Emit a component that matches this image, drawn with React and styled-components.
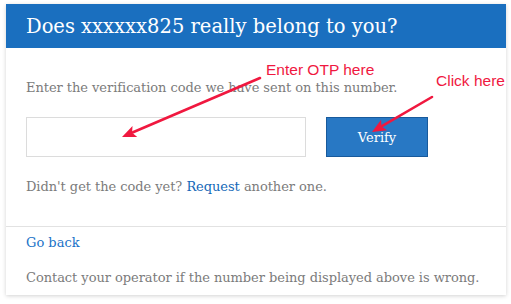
import React from "react";
import styled, { createGlobalStyle } from "styled-components";

const Global = createGlobalStyle`
  html, body { margin: 0; padding: 0; background: #fff; }
  body { width: 511px; height: 304px; overflow: hidden; position: relative; }
  * { box-sizing: border-box; }
`;

const Card = styled.div`
  margin: 4px 5px 0 6px;
  width: 500px;
  background: #fff;
  box-shadow: 0 1px 4px rgba(0, 0, 0, 0.18);
  font-family: "DejaVu Serif", "Liberation Serif", serif;
`;

const Header = styled.div`
  height: 44px;
  background: #1a6fbf;
  color: #fff;
  display: flex;
  align-items: center;
  padding: 0 20px;
  font-size: 19.5px;
`;

const Body = styled.div`
  padding: 30px 20px 29px;
  display: flex;
  flex-direction: column;
`;

const Text = styled.p`
  margin: 0;
  font-size: 13px;
  line-height: 20px;
  color: #7b7b7b;
  letter-spacing: -0.05px;
`;

const Row = styled.div`
  display: flex;
  gap: 20px;
  margin: 19px 0 20px;
`;

const Input = styled.input`
  width: 280px;
  height: 40px;
  border: 1px solid #dcdcdc;
  outline: none;
  padding: 0 10px;
  font-family: inherit;
`;

const Button = styled.button`
  width: 102px;
  height: 40px;
  background: #2878c4;
  border: 1px solid #185a9c;
  color: #fff;
  font-family: inherit;
  font-size: 13px;
  padding: 0;
`;

const Link = styled.a`
  color: ${(p) => (p.$strong ? "#1569b8" : "#1a73c8")};
  text-decoration: none;
`;

const Footer = styled.div`
  border-top: 1px solid #e2e2e2;
  padding: 6px 20px 7px;
  display: flex;
  flex-direction: column;
  gap: 15px;
`;

const GoBack = styled(Link)`
  font-size: 13px;
  line-height: 20px;
`;

const Note = styled.span`
  position: absolute;
  font-family: "Liberation Sans", Arial, sans-serif;
  font-size: 15.5px;
  color: #f0183f;
  white-space: nowrap;
  line-height: 18px;
`;

const Overlay = styled.svg`
  position: absolute;
  left: 0;
  top: 0;
  pointer-events: none;
`;

function Arrow({ x1, y1, x2, y2 }) {
  const dx = x2 - x1;
  const dy = y2 - y1;
  const len = Math.hypot(dx, dy);
  const ux = dx / len;
  const uy = dy / len;
  const hl = 14;
  const hw = 6;
  const bx = x2 - ux * hl;
  const by = y2 - uy * hl;
  const px = -uy;
  const py = ux;
  return (
    <g>
      <line x1={x1} y1={y1} x2={bx + ux * 2} y2={by + uy * 2} stroke="#f0183f" strokeWidth="2.6" strokeLinecap="round" />
      <polygon
        points={`${x2},${y2} ${bx + px * hw},${by + py * hw} ${bx + ux * 3},${by + uy * 3} ${bx - px * hw},${by - py * hw}`}
        fill="#f0183f"
      />
    </g>
  );
}

export default function App() {
  return (
    <>
      <Global />
      <Card>
        <Header>Does xxxxxx825 really belong to you?</Header>
        <Body>
          <Text>Enter the verification code we have sent on this number.</Text>
          <Row>
            <Input />
            <Button>Verify</Button>
          </Row>
          <Text>
            Didn't get the code yet? <Link href="#" $strong>Request</Link> another one.
          </Text>
        </Body>
        <Footer>
          <GoBack href="#">Go back</GoBack>
          <Text>Contact your operator if the number being displayed above is wrong.</Text>
        </Footer>
      </Card>
      <Overlay width="511" height="304" viewBox="0 0 511 304">
        <Arrow x1={260} y1={78} x2={122} y2={137} />
        <Arrow x1={432} y1={97} x2={372} y2={132} />
      </Overlay>
      <Note style={{ left: 266, top: 61 }}>Enter OTP here</Note>
      <Note style={{ left: 436, top: 72 }}>Click here</Note>
    </>
  );
}
